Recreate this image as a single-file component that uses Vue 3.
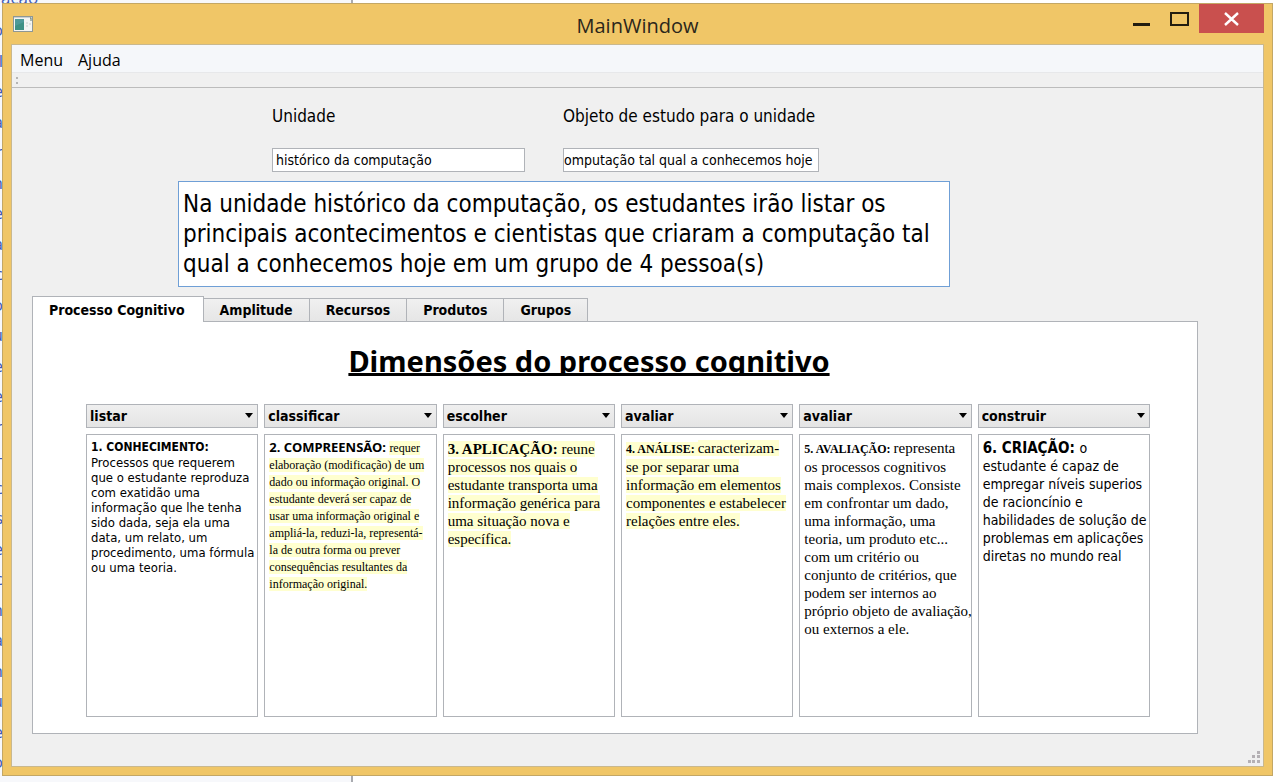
<script setup>
import { ref } from 'vue'

const backdropLines = ['o', 'l', 'e', 'a', 'r', 'n', 'e', 'a', 'c', 'o', 'u', 'e', 'e', 'r', '-', 'c', 's', 'e', 'c', 'n', 'a', 'n', 'u', 'e', 'o']

const unidade = ref('histórico da computação')
const objeto = ref('omputação tal qual a conhecemos hoje')
const objetivo = ref(
  'Na unidade histórico da computação, os estudantes irão listar os\n' +
  'principais acontecimentos e cientistas que criaram a computação tal\n' +
  'qual a conhecemos hoje em um grupo de 4 pessoa(s)'
)

const tabs = ['Processo Cognitivo', 'Amplitude', 'Recursos', 'Produtos', 'Grupos']
const activeTab = ref(tabs[0])

const columns = ref([
  {
    id: 'conhecimento', verb: 'listar', title: '1. CONHECIMENTO:', style: 'sans-small',
    lines: ['', 'Processos que requerem', 'que o estudante reproduza', 'com exatidão uma', 'informação que lhe tenha', 'sido dada, seja ela uma', 'data, um relato, um', 'procedimento, uma fórmula', 'ou uma teoria.']
  },
  {
    id: 'compreensao', verb: 'classificar', title: '2. COMPREENSÃO:', style: 'serif-small', mark: true,
    lines: ['requer', 'elaboração (modificação) de um', 'dado ou informação original. O', 'estudante deverá ser capaz de', 'usar uma informação original e', 'ampliá-la, reduzi-la, representá-', 'la de outra forma ou prever', 'consequências resultantes da', 'informação original.']
  },
  {
    id: 'aplicacao', verb: 'escolher', title: '3. APLICAÇÃO:', style: 'serif-large', mark: true, markTitle: true,
    lines: ['reune', 'processos nos quais o', 'estudante transporta uma', 'informação genérica para', 'uma situação nova e', 'específica.']
  },
  {
    id: 'analise', verb: 'avaliar', title: '4. ANÁLISE:', style: 'serif-medium', mark: true, markTitle: true,
    lines: ['caracterizam-', 'se por separar uma', 'informação em elementos', 'componentes e estabelecer', 'relações entre eles.']
  },
  {
    id: 'avaliacao', verb: 'avaliar', title: '5. AVALIAÇÃO:', style: 'serif-medium',
    lines: ['representa', 'os processos cognitivos', 'mais complexos. Consiste', 'em confrontar um dado,', 'uma informação, uma', 'teoria, um produto etc...', 'com um critério ou', 'conjunto de critérios, que', 'podem ser internos ao', 'próprio objeto de avaliação,', 'ou externos a ele.']
  },
  {
    id: 'criacao', verb: 'construir', title: '6. CRIAÇÃO:', style: 'sans-large',
    lines: ['o', 'estudante é capaz de', 'empregar níveis superios', 'de racioncínio e', 'habilidades de solução de', 'problemas em aplicações', 'diretas no mundo real']
  }
])
const verbs = ['listar', 'classificar', 'escolher', 'avaliar', 'construir']
</script>

<template>
  <div class="desktop">
    <div class="backdrop" aria-hidden="true">
      <span class="backdrop-top">ação</span>
      <div class="backdrop-lines">
        <span v-for="(c, i) in backdropLines" :key="i">{{ c }}</span>
      </div>
    </div>

    <div class="window">
      <header class="titlebar">
        <svg class="app-icon" width="20" height="16" viewBox="0 0 20 16">
          <rect x="0.5" y="0.5" width="19" height="15" fill="#f4f5f3" stroke="#8e9794" />
          <path d="M1 1.5H19" stroke="#c9d0d4" />
          <rect x="2" y="3" width="9" height="11" fill="#3f9184" />
          <path d="M2 3H11V6L2 10Z" fill="#4f9a98" />
          <path d="M13 7H15M13 10H15M16 8H18" stroke="#c9cecb" />
          <path d="M17 2H18V5" stroke="#5d7568" fill="none" />
        </svg>
        <h1 class="title">MainWindow</h1>
        <div class="controls">
          <button type="button" aria-label="Minimizar" class="control">
            <svg width="18" height="20" viewBox="0 0 18 20"><path d="M0 15.500H17" stroke="#221d10" stroke-width="3" /></svg>
          </button>
          <button type="button" aria-label="Maximizar" class="control">
            <svg width="20" height="20" viewBox="0 0 20 20"><path d="M1 4H18V16H1Z" fill="none" stroke="#221d10" stroke-width="2" /></svg>
          </button>
          <button type="button" aria-label="Fechar" class="control close">
            <svg width="16" height="14" viewBox="0 0 16 14"><path d="M1 1L14 13M14 1L1 13" stroke="#fff" stroke-width="2.400" /></svg>
          </button>
        </div>
      </header>

      <main class="client">
        <nav class="menubar">
          <button type="button">Menu</button>
          <button type="button">Ajuda</button>
        </nav>
        <div class="toolbar"><i></i><i></i></div>

        <form class="fields" @submit.prevent>
          <div class="field">
            <label for="unidade">Unidade</label>
            <input id="unidade" v-model="unidade" type="text">
          </div>
          <div class="field scrolled">
            <label for="objeto">Objeto de estudo para o unidade</label>
            <input id="objeto" v-model="objeto" type="text">
          </div>
        </form>

        <textarea v-model="objetivo" class="objective" rows="3" aria-label="Objetivo" spellcheck="false"></textarea>

        <section class="tabs">
          <div class="tablist" role="tablist">
            <button
              v-for="tab in tabs"
              :key="tab"
              type="button"
              role="tab"
              class="tab"
              :class="{ active: tab === activeTab }"
              :aria-selected="tab === activeTab"
              @click="activeTab = tab"
            >{{ tab }}</button>
          </div>
          <div class="panel" role="tabpanel">
            <h2>Dimensões do processo cognitivo</h2>
            <div class="columns">
              <div v-for="col in columns" :key="col.id" class="column">
                <div class="combo">
                  <select v-model="col.verb" :aria-label="col.title">
                    <option v-for="v in verbs" :key="v">{{ v }}</option>
                  </select>
                </div>
                <div class="pane" :class="col.style">
                  <div v-for="(line, i) in col.lines" :key="i" class="line">
                    <b v-if="i === 0" :class="{ mark: col.markTitle }">{{ col.title + (line ? '&nbsp;' : '') }}</b><span :class="{ mark: col.mark }">{{ line }}</span>
                  </div>
                </div>
              </div>
            </div>
          </div>
        </section>

        <svg class="grip" width="12" height="12" viewBox="0 0 12 12" fill="#b4b0b4">
          <path d="M9 0h3v3h-3zM4 4h3v3h-3zM9 4h3v3h-3zM0 9h3v3h-3zM4 9h3v3h-3zM9 9h3v3h-3z" />
        </svg>
      </main>
    </div>
  </div>
</template>

<style>
body {
  background: #fff;
}
</style>

<style scoped>
* {
  box-sizing: border-box;
}

.desktop {
  --ui: "DejaVu Sans Condensed", "Noto Sans", sans-serif;
  --caption: "Open Sans", "Noto Sans", sans-serif;
  --heading: "Noto Sans", sans-serif;
  --line: #b0b3b8;
  position: relative;
  display: flex;
  min-height: 100vh;
  padding: 3px 2px 6px;
  overflow: hidden;
  font-family: var(--ui);
  color: #000;
}

button,
input,
select,
textarea {
  margin: 0;
  border-radius: 0;
  font: inherit;
  color: inherit;
}

.backdrop {
  position: absolute;
  inset: 0 auto 0 0;
  width: 353px;
  overflow: hidden;
  border-right: 2px solid #a9abb0;
  background: #f7f8fb;
  color: #3f5bb5;
  font-family: var(--caption);
  font-size: 17px;
}

.backdrop-top {
  position: absolute;
  top: -12px;
  left: 1px;
  line-height: 20px;
}

.backdrop-lines {
  position: absolute;
  inset: 18px auto 8px -7px;
  width: 10px;
  display: flex;
  flex-direction: column;
  align-items: flex-end;
  justify-content: space-between;
  line-height: 24px;
}

.window {
  position: relative;
  flex: 1;
  display: flex;
  flex-direction: column;
  min-width: 0;
  padding: 0 8px 8px;
  border: 1px solid #c3a765;
  background: #f0c667;
}

.titlebar {
  display: grid;
  grid-template-columns: 1fr auto 1fr;
  align-items: start;
  height: 40px;
}

.app-icon {
  margin: 12px 0 0 2px;
}

.title {
  margin: 8px 0 0;
  font: 400 20px/28px var(--caption);
  color: #2b261b;
}

.controls {
  display: flex;
  justify-content: flex-end;
  align-items: flex-start;
}

.control {
  display: flex;
  justify-content: center;
  width: 38px;
  height: 29px;
  padding: 5px 0 0;
  border: 0;
  background: none;
}

.close {
  width: 65px;
  align-items: center;
  padding: 0;
  background: #c9504e;
}

.client {
  position: relative;
  flex: 1;
  display: flex;
  flex-direction: column;
  border: 1px solid #c9b88e;
  background: #f0f0f0;
}

.menubar {
  display: flex;
  gap: 15px;
  height: 28px;
  padding: 2px 8px 0;
  border-bottom: 1px solid #e7e8ea;
  background: #f5f7fa;
  font: 16px/26px var(--caption);
}

.menubar button {
  padding: 0;
  border: 0;
  background: none;
}

.toolbar {
  display: flex;
  flex-direction: column;
  gap: 3px;
  height: 15px;
  padding: 4px 4px 0;
  border-bottom: 1px solid #bcbcbc;
}

.toolbar i {
  width: 2px;
  height: 2px;
  background: #b5b5b5;
}

.fields {
  display: flex;
  gap: 38px;
  margin: 17px 0 0 260px;
}

.field {
  display: flex;
  flex-direction: column;
  gap: 20px;
  width: 253px;
}

.field label {
  font-size: 17px;
  line-height: 23px;
  white-space: nowrap;
}

.field input {
  width: 100%;
  height: 24px;
  padding: 0 3px;
  border: 1px solid var(--line);
  background: #fff;
  font-size: 14px;
}

.field.scrolled {
  width: 256px;
}

.field.scrolled input {
  padding: 0;
}

.objective {
  width: 772px;
  height: 106px;
  margin: 9px 0 0 166px;
  padding: 7px 4px;
  border: 1px solid #6f9fd6;
  outline: 0;
  overflow: hidden;
  resize: none;
  background: #fff;
  font-size: 24px;
  line-height: 30px;
  white-space: pre;
}

.tabs {
  flex: 1;
  display: flex;
  flex-direction: column;
  margin: 9px 65px 32px 20px;
}

.tablist {
  position: relative;
  display: flex;
  align-items: flex-end;
  height: 26px;
  margin-bottom: -1px;
}

.tab {
  height: 24px;
  margin-left: -1px;
  padding: 0 16px;
  border: 1px solid var(--line);
  background: linear-gradient(#f0f0f0, #e6e6e6);
  font-size: 14px;
  font-weight: 700;
  line-height: 22px;
  white-space: nowrap;
}

.tab.active {
  height: 26px;
  margin-left: 0;
  padding: 0 18px 0 16px;
  border-bottom: 0;
  background: #fff;
}

.panel {
  flex: 1;
  display: flex;
  flex-direction: column;
  padding: 20px 47px 16px 53px;
  border: 1px solid var(--line);
  background: #fff;
}

h2 {
  height: 34px;
  margin: 0 0 28px;
  padding-right: 58px;
  overflow: hidden;
  font-family: var(--heading);
  font-size: 29px;
  line-height: 37px;
  text-align: center;
  text-decoration: underline;
  text-decoration-skip-ink: none;
  text-decoration-thickness: 3px;
  text-underline-offset: 1px;
}

.columns {
  flex: 1;
  display: grid;
  grid-template-columns: repeat(6, minmax(0, 1fr));
  gap: 6px;
}

.column {
  display: flex;
  flex-direction: column;
  gap: 6px;
}

.combo {
  position: relative;
}

.combo::after {
  content: "";
  position: absolute;
  top: 9px;
  right: 5px;
  border: 4px solid transparent;
  border-top: 5px solid #000;
  border-bottom: 0;
  pointer-events: none;
}

.combo select {
  display: block;
  width: 100%;
  height: 24px;
  padding: 0 3px;
  appearance: none;
  border: 1px solid var(--line);
  background: linear-gradient(#efefef, #e4e4e4);
  font-size: 14px;
  font-weight: 700;
}

.pane {
  flex: 1;
  padding: 4px;
  border: 1px solid var(--line);
  background: #fff;
  white-space: nowrap;
}

.mark {
  background: #ffffcf;
}

.sans-small {
  font-size: 13px;
  line-height: 15px;
}

.sans-small b {
  font-size: 12px;
}

.sans-large {
  font-size: 14px;
  line-height: 18px;
}

.sans-large b {
  font-size: 15px;
}

.serif-small,
.serif-medium,
.serif-large {
  font-family: "Liberation Serif", serif;
}

.serif-small {
  font-size: 12px;
  line-height: 17px;
}

.serif-small b {
  font-family: var(--heading);
  font-size: 13px;
}

.serif-medium {
  font-size: 15px;
  line-height: 18px;
}

.serif-medium b {
  font-size: 12px;
}

.serif-large {
  padding-top: 5px;
  font-size: 15px;
  line-height: 18px;
}

.grip {
  position: absolute;
  right: 3px;
  bottom: 3px;
}
</style>
